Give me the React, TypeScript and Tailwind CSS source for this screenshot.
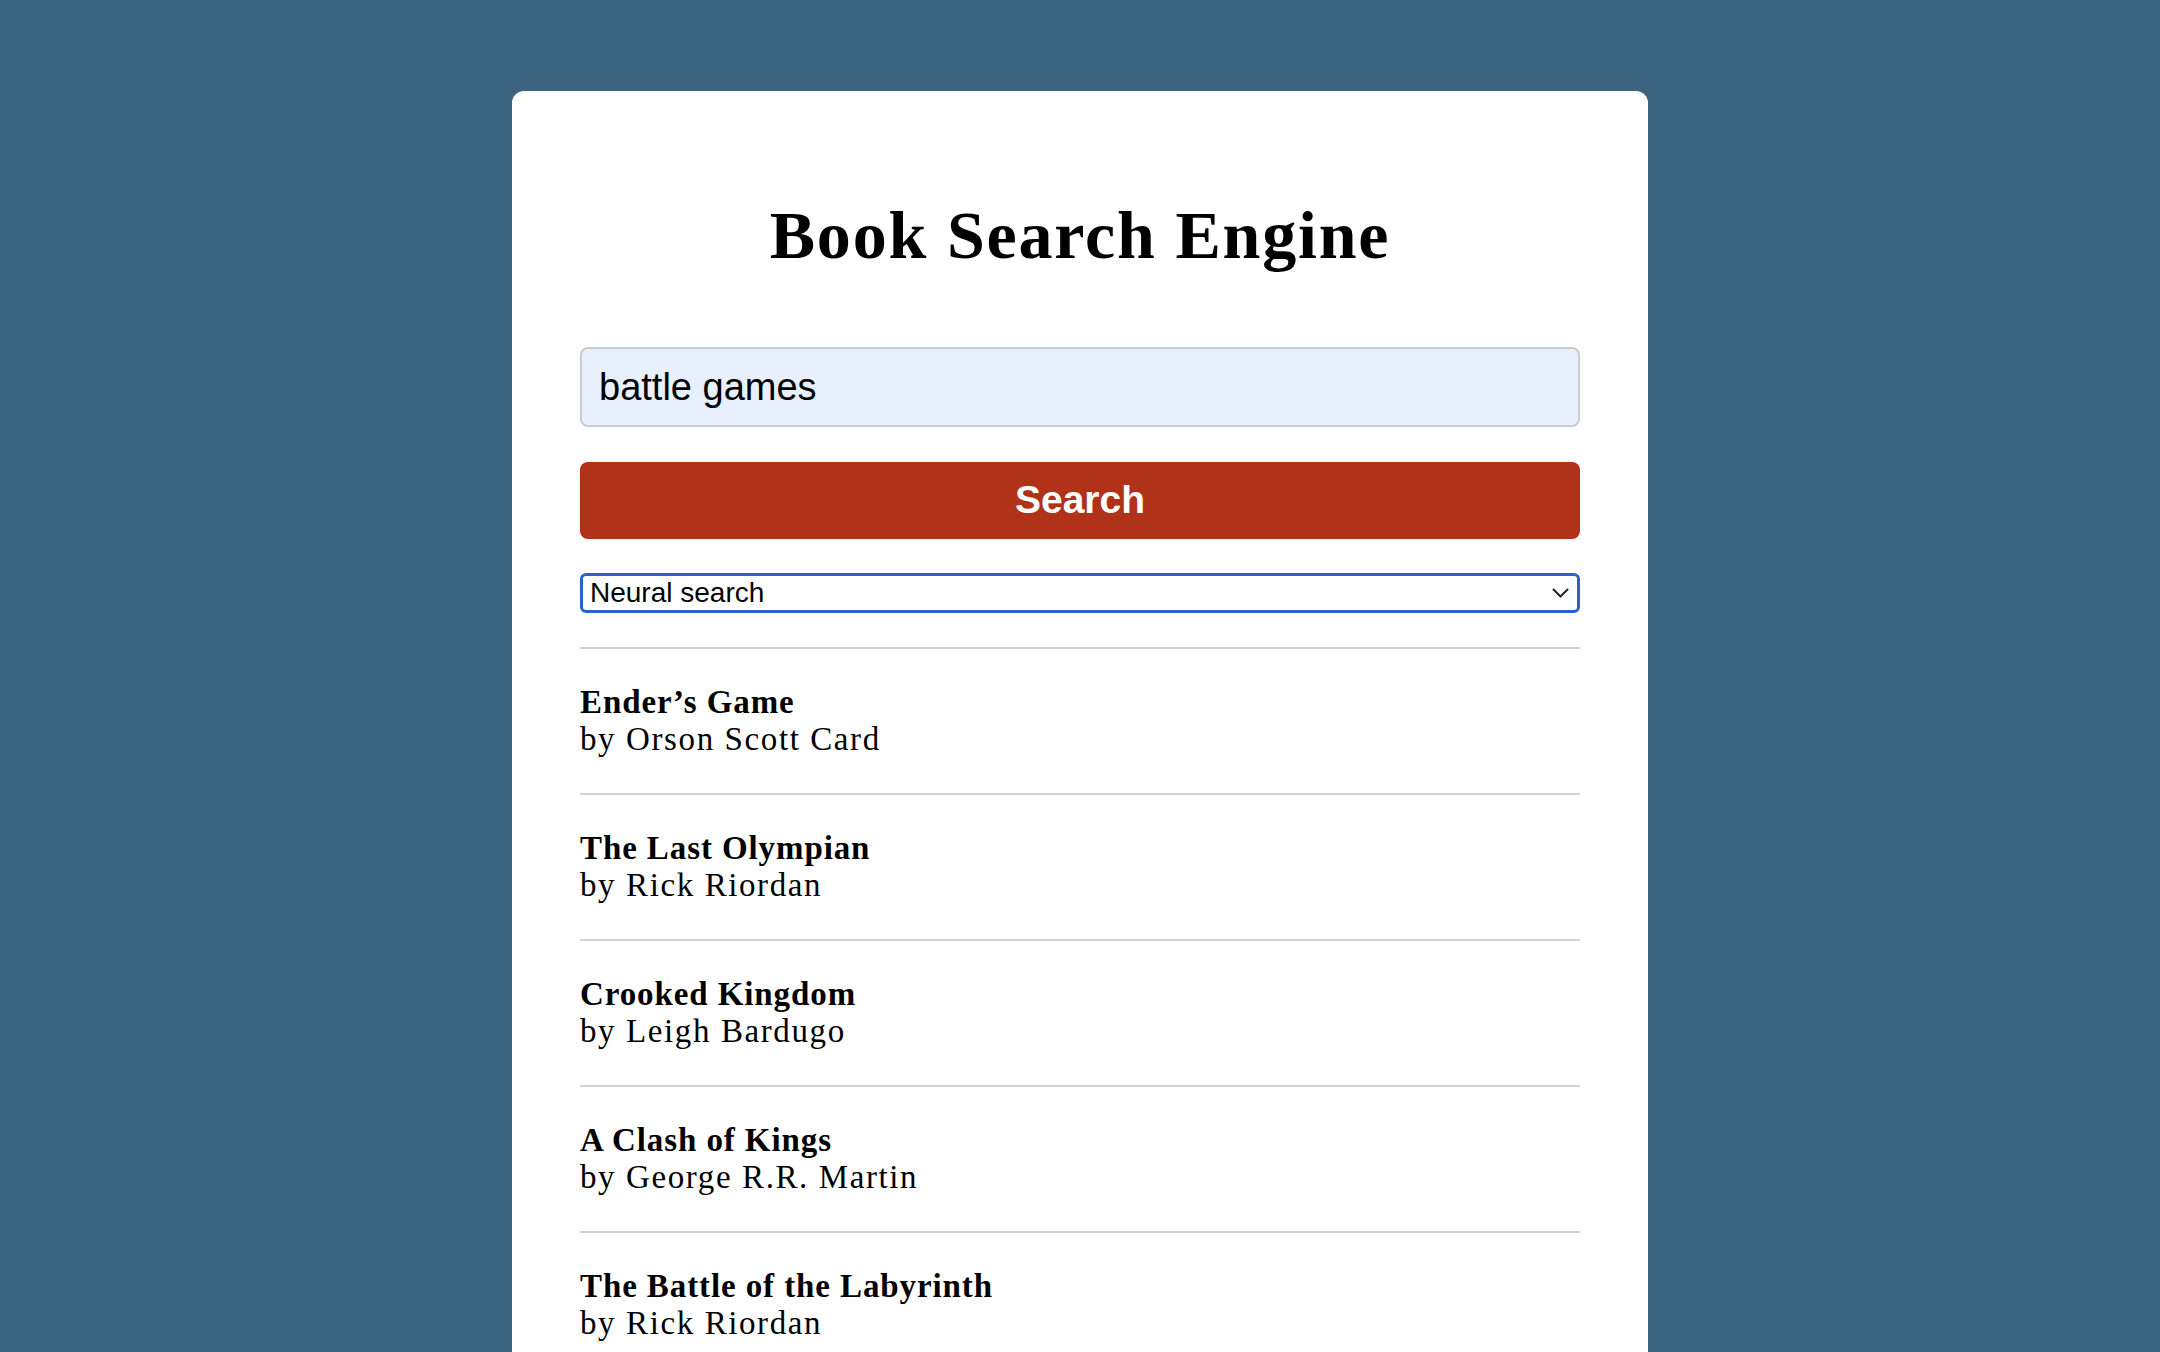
import React from 'react';

const BOOKS = [
  { title: 'Ender’s Game', author: 'Orson Scott Card' },
  { title: 'The Last Olympian', author: 'Rick Riordan' },
  { title: 'Crooked Kingdom', author: 'Leigh Bardugo' },
  { title: 'A Clash of Kings', author: 'George R.R. Martin' },
  { title: 'The Battle of the Labyrinth', author: 'Rick Riordan' },
  { title: 'Percy Jackson and the Lightning Thief', author: 'Rick Riordan' },
];

const App: React.FC = () => {
  return (
    <div className="min-h-screen bg-[#3c6480] pt-[91px] font-['Liberation_Serif',serif]">
      {/* card */}
      <div className="mx-auto w-[1136px] rounded-[12px] bg-white px-[68px] pt-[110px] pb-[60px]">
        <h1 className="text-center text-[68px] leading-none font-bold tracking-[1.8px] text-black">
          Book Search Engine
        </h1>

        {/* search form */}
        <div className="mt-[78px] flex flex-col">
          <div className="h-[80px] rounded-[8px] border-2 border-[#cccccc] bg-[#e8f0fe] pl-[17px] flex items-center font-['Liberation_Sans',Arial,sans-serif] text-[38px] text-black">
            battle games
          </div>
          <button className="mt-[35px] h-[77px] w-full rounded-[8px] bg-[#b03219] font-['Liberation_Sans',Arial,sans-serif] text-[39px] font-bold text-white">
            Search
          </button>
          <div className="mt-[34px] h-[40px] rounded-[6px] border-[3px] border-[#2a62c9] pl-[7px] pr-[8px] flex items-center justify-between font-['Liberation_Sans',Arial,sans-serif] text-[28px] text-black">
            <span>Neural search</span>
            <svg width="17" height="10" viewBox="0 0 17 10" fill="none">
              <path d="M1.5 1.5 L8.5 8.5 L15.5 1.5" stroke="#222" strokeWidth="2" strokeLinecap="round" strokeLinejoin="round" />
            </svg>
          </div>
        </div>

        {/* results */}
        <ul className="mt-[34px] border-t-2 border-[#d2d2d2]">
          {BOOKS.map((b) => (
            <li key={b.title} className="border-b-2 border-[#d2d2d2] py-[35px] text-[33px] leading-[37px] text-black">
              <div className="font-bold tracking-[0.9px]">{b.title}</div>
              <div className="tracking-[1.6px]">by {b.author}</div>
            </li>
          ))}
        </ul>
      </div>
    </div>
  );
};

export default App;
